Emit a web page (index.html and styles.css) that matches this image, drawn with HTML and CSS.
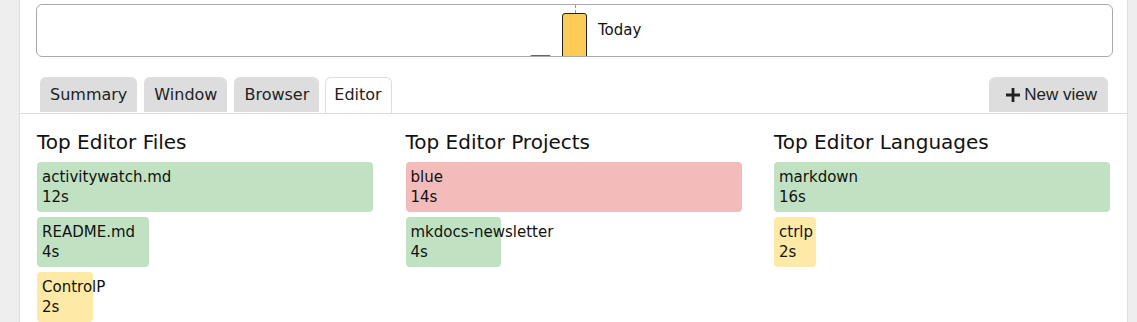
FILE: index.html
```html
<!DOCTYPE html>
<html lang="en">
<head>
  <meta charset="utf-8">
  <title>Activity</title>
  <link rel="stylesheet" href="styles.css">
</head>
<body>
  <div class="page">
    <!-- Timeline of the day -->
    <div class="timeline">
      <div class="tick"></div>
      <div class="item item-gray"></div>
      <div class="item item-today"></div>
      <span class="item-label">Today</span>
    </div>

    <!-- View tabs -->
    <div class="tabs">
      <a class="tab" href="#">Summary</a>
      <a class="tab" href="#">Window</a>
      <a class="tab" href="#">Browser</a>
      <a class="tab active" href="#">Editor</a>
      <a class="tab new-view" href="#">
        <svg class="plus" width="14" height="14" viewBox="0 0 14 14"><path d="M5.6 0h2.8v5.6H14v2.8H8.4V14H5.6V8.4H0V5.6h5.6z"/></svg>New view
      </a>
    </div>

    <div class="columns">
      <div class="column">
        <h4>Top Editor Files</h4>
        <div class="bar green" style="width: 100%">activitywatch.md<br>12s</div>
        <div class="bar green" style="width: 33.333%">README.md<br>4s</div>
        <div class="bar yellow" style="width: 16.667%">ControlP<br>2s</div>
      </div>
      <div class="column">
        <h4>Top Editor Projects</h4>
        <div class="bar red" style="width: 100%">blue<br>14s</div>
        <div class="bar green" style="width: 28.571%">mkdocs-newsletter<br>4s</div>
      </div>
      <div class="column">
        <h4>Top Editor Languages</h4>
        <div class="bar green" style="width: 100%">markdown<br>16s</div>
        <div class="bar yellow" style="width: 12.5%">ctrlp<br>2s</div>
      </div>
    </div>
  </div>
</body>
</html>
```

FILE: styles.css
```css
/* Basic page */
body {
  margin: 0;
  background-color: #eee;
  font-family: "DejaVu Sans", sans-serif;
  color: #111;
  height: 322px;
  overflow: hidden;
}

.page {
  margin-left: 19px;
  width: 1107px;
  min-height: 322px;
  background-color: #fff;
  border-left: 1px solid #ddd;
  border-right: 1px solid #ddd;
  padding-top: 4px;
}

/* Timeline box */
.timeline {
  position: relative;
  margin-left: 16px;
  width: 1075px;
  height: 51px;
  border: 1px solid #aaa;
  border-radius: 6px;
  overflow: hidden;
}

.tick {
  position: absolute;
  left: 538px;
  top: 0;
  height: 8px;
  border-left: 1px dashed #999;
}

.item {
  position: absolute;
  border: 1px solid #222;
  border-radius: 3px 3px 0 0;
}

.item-today {
  left: 525px;
  top: 8px;
  width: 23px;
  height: 60px;
  background-color: #fecb57;
}

.item-gray {
  left: 492px;
  top: 50px;
  width: 21px;
  height: 10px;
  background-color: #bbb;
  border-color: #666;
}

.item-label {
  position: absolute;
  left: 561px;
  top: 16px;
  font-size: 15px;
}

/* Tabs */
.tabs {
  display: flex;
  margin-top: 20px;
  padding: 0 19px 0 20px;
  border-bottom: 1px solid #ddd;
}

.tab {
  display: block;
  height: 35px;
  line-height: 35px;
  padding: 0 10px;
  margin-right: 7px;
  background-color: #ddd;
  border-radius: 6px 6px 0 0;
  color: #222;
  text-decoration: none;
  font-size: 16px;
}

.tab.active {
  background-color: #fff;
  border: 1px solid #ddd;
  border-bottom: none;
  height: 35px;
  line-height: 33px;
  padding: 0 9px 0 8px;
  margin-left: -1px;
}

.new-view {
  margin-left: auto;
  margin-right: 0;
  display: flex;
  align-items: center;
  padding: 0 11px 0 17px;
  font-family: "Liberation Sans", Arial, sans-serif;
  font-size: 17px;
}

.plus {
  margin-right: 4px;
  fill: #222;
}

/* Top lists */
.columns {
  display: grid;
  grid-template-columns: repeat(3, 336px);
  column-gap: 32.5px;
  padding-left: 17px;
}

h4 {
  margin: 16px 0 8px 0;
  font-size: 20px;
  font-weight: normal;
  line-height: 24px;
}

.bar {
  box-sizing: border-box;
  height: 50px;
  margin-bottom: 5px;
  padding: 5px;
  border-radius: 4px;
  font-size: 15px;
  line-height: 20px;
  white-space: nowrap;
}

.green {
  background-color: #c0e2c2;
}

.red {
  background-color: #f4bbbb;
}

.yellow {
  background-color: #fee9a6;
}
```
